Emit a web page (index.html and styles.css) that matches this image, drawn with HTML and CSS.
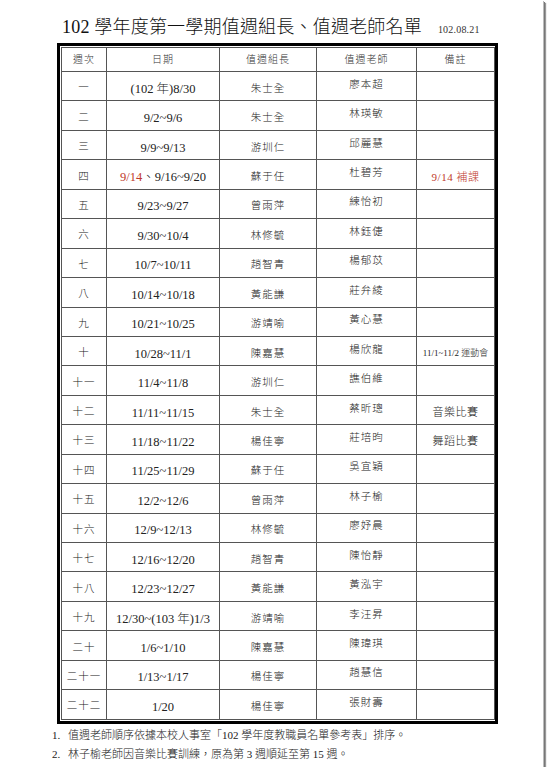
FILE: index.html
```html
<!DOCTYPE html>
<html lang="zh-Hant">
<head>
<meta charset="utf-8">
<title>102 學年度第一學期值週組長、值週老師名單</title>
<link rel="stylesheet" href="styles.css">
</head>
<body>
<div class="page">
  <div class="head">
    <h1 class="title">102 學年度第一學期值週組長、值週老師名單</h1>
    <span class="date">102.08.21</span>
  </div>
  <div class="frame">
    <table class="duty">
      <colgroup>
        <col class="c-week"><col class="c-date"><col class="c-lead"><col class="c-teach"><col class="c-note">
      </colgroup>
      <thead>
        <tr><th>週次</th><th>日期</th><th>值週組長</th><th>值週老師</th><th>備註</th></tr>
      </thead>
      <tbody>
        <tr><td class="wk">一</td><td class="dt">(102 年)8/30</td><td class="ld">朱士全</td><td class="tc">廖本超</td><td class="nt"></td></tr>
        <tr><td class="wk">二</td><td class="dt">9/2~9/6</td><td class="ld">朱士全</td><td class="tc">林瑛敏</td><td class="nt"></td></tr>
        <tr><td class="wk">三</td><td class="dt">9/9~9/13</td><td class="ld">游圳仁</td><td class="tc">邱麗慧</td><td class="nt"></td></tr>
        <tr><td class="wk">四</td><td class="dt"><span class="red">9/14</span>、9/16~9/20</td><td class="ld">蘇于任</td><td class="tc">杜碧芳</td><td class="nt red">9/14 補課</td></tr>
        <tr><td class="wk">五</td><td class="dt">9/23~9/27</td><td class="ld">曾雨萍</td><td class="tc">練怡初</td><td class="nt"></td></tr>
        <tr><td class="wk">六</td><td class="dt">9/30~10/4</td><td class="ld">林修毓</td><td class="tc">林鈺倢</td><td class="nt"></td></tr>
        <tr><td class="wk">七</td><td class="dt">10/7~10/11</td><td class="ld">趙智青</td><td class="tc">楊郁苡</td><td class="nt"></td></tr>
        <tr><td class="wk">八</td><td class="dt">10/14~10/18</td><td class="ld">黃能謙</td><td class="tc">莊弁綾</td><td class="nt"></td></tr>
        <tr><td class="wk">九</td><td class="dt">10/21~10/25</td><td class="ld">游靖喻</td><td class="tc">黃心慧</td><td class="nt"></td></tr>
        <tr><td class="wk">十</td><td class="dt">10/28~11/1</td><td class="ld">陳嘉慧</td><td class="tc">楊欣龍</td><td class="nt small">11/1~11/2 運動會</td></tr>
        <tr><td class="wk">十一</td><td class="dt">11/4~11/8</td><td class="ld">游圳仁</td><td class="tc">譙伯維</td><td class="nt"></td></tr>
        <tr><td class="wk">十二</td><td class="dt">11/11~11/15</td><td class="ld">朱士全</td><td class="tc">蔡昕璁</td><td class="nt">音樂比賽</td></tr>
        <tr><td class="wk">十三</td><td class="dt">11/18~11/22</td><td class="ld">楊佳寧</td><td class="tc">莊培昀</td><td class="nt">舞蹈比賽</td></tr>
        <tr><td class="wk">十四</td><td class="dt">11/25~11/29</td><td class="ld">蘇于任</td><td class="tc">吳宜穎</td><td class="nt"></td></tr>
        <tr><td class="wk">十五</td><td class="dt">12/2~12/6</td><td class="ld">曾雨萍</td><td class="tc">林子榆</td><td class="nt"></td></tr>
        <tr><td class="wk">十六</td><td class="dt">12/9~12/13</td><td class="ld">林修毓</td><td class="tc">廖妤晨</td><td class="nt"></td></tr>
        <tr><td class="wk">十七</td><td class="dt">12/16~12/20</td><td class="ld">趙智青</td><td class="tc">陳怡靜</td><td class="nt"></td></tr>
        <tr><td class="wk">十八</td><td class="dt">12/23~12/27</td><td class="ld">黃能謙</td><td class="tc">黃泓宇</td><td class="nt"></td></tr>
        <tr><td class="wk">十九</td><td class="dt">12/30~(103 年)1/3</td><td class="ld">游靖喻</td><td class="tc">李汪昇</td><td class="nt"></td></tr>
        <tr><td class="wk">二十</td><td class="dt">1/6~1/10</td><td class="ld">陳嘉慧</td><td class="tc">陳瑋琪</td><td class="nt"></td></tr>
        <tr><td class="wk">二十一</td><td class="dt">1/13~1/17</td><td class="ld">楊佳寧</td><td class="tc">趙慧信</td><td class="nt"></td></tr>
        <tr><td class="wk">二十二</td><td class="dt">1/20</td><td class="ld">楊佳寧</td><td class="tc">張財壽</td><td class="nt"></td></tr>
      </tbody>
    </table>
  </div>
  <ol class="notes">
    <li><span class="num">1.</span>值週老師順序依據本校人事室「102 學年度教職員名單參考表」排序。</li>
    <li><span class="num">2.</span>林子榆老師因音樂比賽訓練，原為第 3 週順延至第 15 週。</li>
  </ol>
</div>
</body>
</html>
```

FILE: styles.css
```css
html, body {
  margin: 0;
  padding: 0;
  background: #fff;
}

body {
  font-family: "Liberation Serif", "Noto Sans CJK TC", serif;
  color: #222;
}

.page {
  width: 543px;
  height: 767px;
  background: #fff;
  box-shadow: 1px 1px 0 #bbb, 2px 2px 0 #777, 3px 3px 1px #999;
  overflow: hidden;
}

.head {
  display: flex;
  align-items: baseline;
  padding: 15px 0 0 62px;
  height: 28px;
}

.title {
  margin: 0;
  font-size: 18px;
  line-height: 24px;
  font-weight: 300;
  letter-spacing: 0.2px;
  color: #111;
}

.date {
  margin-left: 16px;
  font-size: 10px;
  letter-spacing: 0.2px;
  color: #333;
}

.frame {
  margin-left: 57px;
  width: 433px;
  border: 3px solid #000;
  padding: 1px;
}

.duty {
  border-collapse: collapse;
  table-layout: fixed;
  width: 433px;
}

.c-week { width: 45px; }
.c-date { width: 113px; }
.c-lead { width: 97px; }
.c-teach { width: 100px; }
.c-note { width: 78px; }

.duty th,
.duty td {
  border: 1px solid #555;
  text-align: center;
  vertical-align: middle;
  padding: 0;
  white-space: nowrap;
  line-height: 14px;
}

.duty thead tr {
  height: 24px;
}

.duty tbody tr {
  height: 29.45px;
}

.duty th {
  font-size: 10px;
  font-weight: 300;
  letter-spacing: 1px;
  color: #333;
}

.duty td {
  font-size: 10.5px;
  font-weight: 300;
  letter-spacing: 0.5px;
}

.duty td.wk {
  padding-top: 4px;
  letter-spacing: 1px;
}

.duty td.dt {
  font-size: 12.5px;
  letter-spacing: 0;
  padding-top: 5px;
}

.duty td.ld {
  padding-top: 5px;
  letter-spacing: 1px;
}

.duty td.tc {
  padding-bottom: 3px;
  letter-spacing: 1px;
}

.duty td.nt {
  font-size: 11px;
  padding-top: 4px;
  letter-spacing: 0.5px;
}

.duty td.small {
  font-size: 9px;
  letter-spacing: 0;
}

.red {
  color: #c0392b;
}

.notes {
  list-style: none;
  margin: 2px 0 0 52px;
  padding: 0;
  font-size: 11px;
  line-height: 19px;
  font-weight: 300;
  color: #222;
}

.num {
  display: inline-block;
  width: 16px;
}
```
